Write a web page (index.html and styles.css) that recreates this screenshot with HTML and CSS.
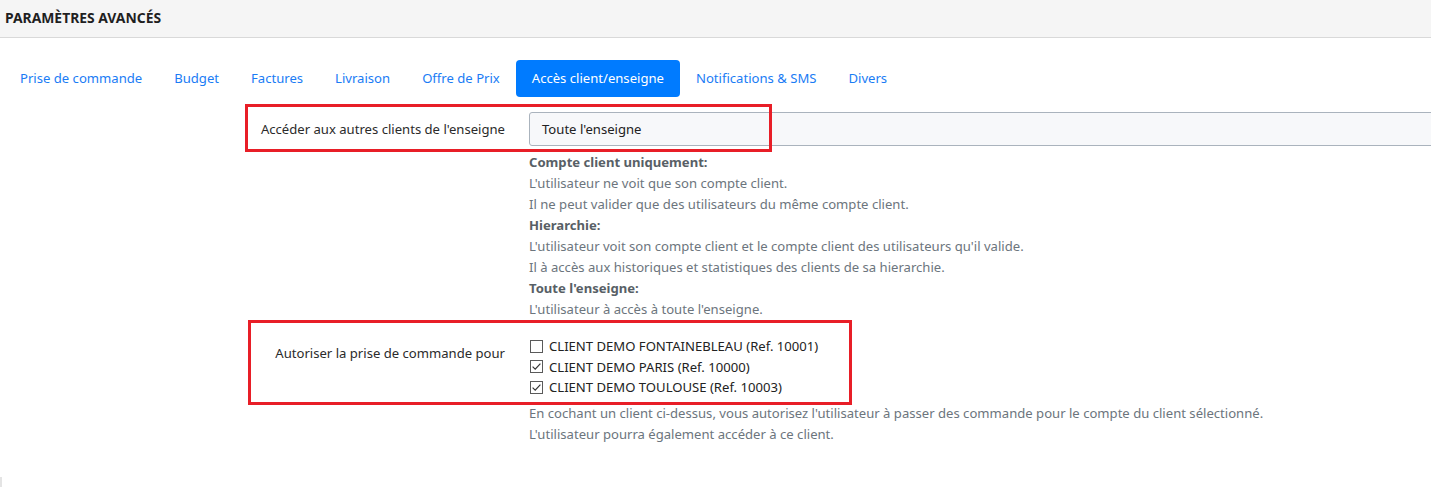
FILE: index.html
```html
<!DOCTYPE html>
<html lang="fr">
<head>
<meta charset="utf-8">
<title>Paramètres avancés</title>
<link rel="stylesheet" href="styles.css">
</head>
<body>
<div class="page">
  <header class="header">PARAMÈTRES AVANCÉS</header>
  <nav class="tabs">
    <a class="tab">Prise de commande</a>
    <a class="tab">Budget</a>
    <a class="tab">Factures</a>
    <a class="tab">Livraison</a>
    <a class="tab">Offre de Prix</a>
    <a class="tab active">Accès client/enseigne</a>
    <a class="tab">Notifications &amp; SMS</a>
    <a class="tab">Divers</a>
  </nav>
  <section class="form">
    <div class="row">
      <label class="label label-mid">Accéder aux autres clients de l'enseigne</label>
      <div class="field">
        <div class="select">Toute l'enseigne</div>
        <div class="help">
          <strong>Compte client uniquement:</strong><br>
          L'utilisateur ne voit que son compte client.<br>
          Il ne peut valider que des utilisateurs du même compte client.<br>
          <strong>Hierarchie:</strong><br>
          L'utilisateur voit son compte client et le compte client des utilisateurs qu'il valide.<br>
          Il à accès aux historiques et statistiques des clients de sa hierarchie.<br>
          <strong>Toute l'enseigne:</strong><br>
          L'utilisateur à accès à toute l'enseigne.
        </div>
      </div>
    </div>
    <div class="row row2">
      <label class="label label-top">Autoriser la prise de commande pour</label>
      <div class="field">
        <div class="checks">
          <label class="check"><span class="box"></span>CLIENT DEMO FONTAINEBLEAU (Ref. 10001)</label>
          <label class="check"><span class="box checked"><svg viewBox="0 0 13 13" width="13" height="13"><path d="M2.6 6.6 L5.2 9.1 L10.4 3.6" fill="none" stroke="#333" stroke-width="1.2"/></svg></span>CLIENT DEMO PARIS (Ref. 10000)</label>
          <label class="check"><span class="box checked"><svg viewBox="0 0 13 13" width="13" height="13"><path d="M2.6 6.6 L5.2 9.1 L10.4 3.6" fill="none" stroke="#333" stroke-width="1.2"/></svg></span>CLIENT DEMO TOULOUSE (Ref. 10003)</label>
        </div>
        <div class="help help2">
          En cochant un client ci-dessus, vous autorisez l'utilisateur à passer des commande pour le compte du client sélectionné.<br>
          L'utilisateur pourra également accéder à ce client.
        </div>
      </div>
    </div>
  </section>
  <div class="mark mark1"></div>
  <div class="mark mark2"></div>
  <div class="corner"></div>
</div>
</body>
</html>
```
FILE: styles.css
```css
html, body {
  margin: 0;
  padding: 0;
  background: #fff;
  overflow: hidden;
}
body {
  font-family: "Noto Sans", "Open Sans", sans-serif;
  font-size: 13.1px;
  color: #212529;
  width: 1431px;
  height: 487px;
}
.page {
  position: relative;
  height: 487px;
}
.header {
  height: 38px;
  box-sizing: border-box;
  background: #f5f5f5;
  border-bottom: 1px solid #d9d9d9;
  padding: 0 5px 3px;
  display: flex;
  align-items: center;
  font-weight: 700;
  font-size: 13.9px;
  color: #1f1f1f;
}
.tabs {
  display: flex;
  margin-top: 22px;
  padding-left: 4px;
}
.tab {
  display: block;
  padding: 8px 16px;
  line-height: 21px;
  color: #1a7cf5;
  border-radius: 4px;
  cursor: pointer;
}
.tab.active {
  background: #007bff;
  color: #fff;
}
.form {
  margin-top: 15px;
}
.row {
  display: grid;
  grid-template-columns: 505px 1fr;
  column-gap: 24px;
}
.label {
  text-align: right;
  color: #2b2b2b;
  line-height: 21px;
}
.label-mid {
  padding-top: 7px;
}
.label-top {
  padding-top: 7px;
}
.select {
  height: 34px;
  box-sizing: border-box;
  width: calc(100% + 10px);
  background: #f7f8fa;
  border: 1px solid #aab3bd;
  border-radius: 3px;
  padding: 0 12px;
  display: flex;
  align-items: center;
  color: #222;
}
.help {
  margin-top: 6px;
  color: #6c757d;
  line-height: 21px;
  font-size: 13.1px;
}
.help strong {
  color: #585f66;
}
.row2 {
  margin-top: 16px;
}
.checks {
  display: flex;
  flex-direction: column;
}
.check {
  display: flex;
  align-items: center;
  line-height: 20.5px;
  color: #222;
  gap: 6px;
  padding-left: 1px;
}
.box {
  width: 13px;
  height: 13px;
  box-sizing: border-box;
  border: 1px solid #5a5a5a;
  background: #fff;
  display: block;
  position: relative;
}
.box svg {
  position: absolute;
  left: -1px;
  top: -1px;
}
.help2 {
  margin-top: 5px;
}
.mark {
  position: absolute;
  border: 3px solid #e81e27;
  box-sizing: border-box;
}
.mark1 {
  left: 245px;
  top: 104px;
  width: 527px;
  height: 48px;
}
.mark2 {
  left: 248px;
  top: 320px;
  width: 604px;
  height: 85px;
}
.corner {
  position: absolute;
  left: 0;
  top: 477px;
  width: 2px;
  height: 10px;
  background: #e4e4e4;
}
```
